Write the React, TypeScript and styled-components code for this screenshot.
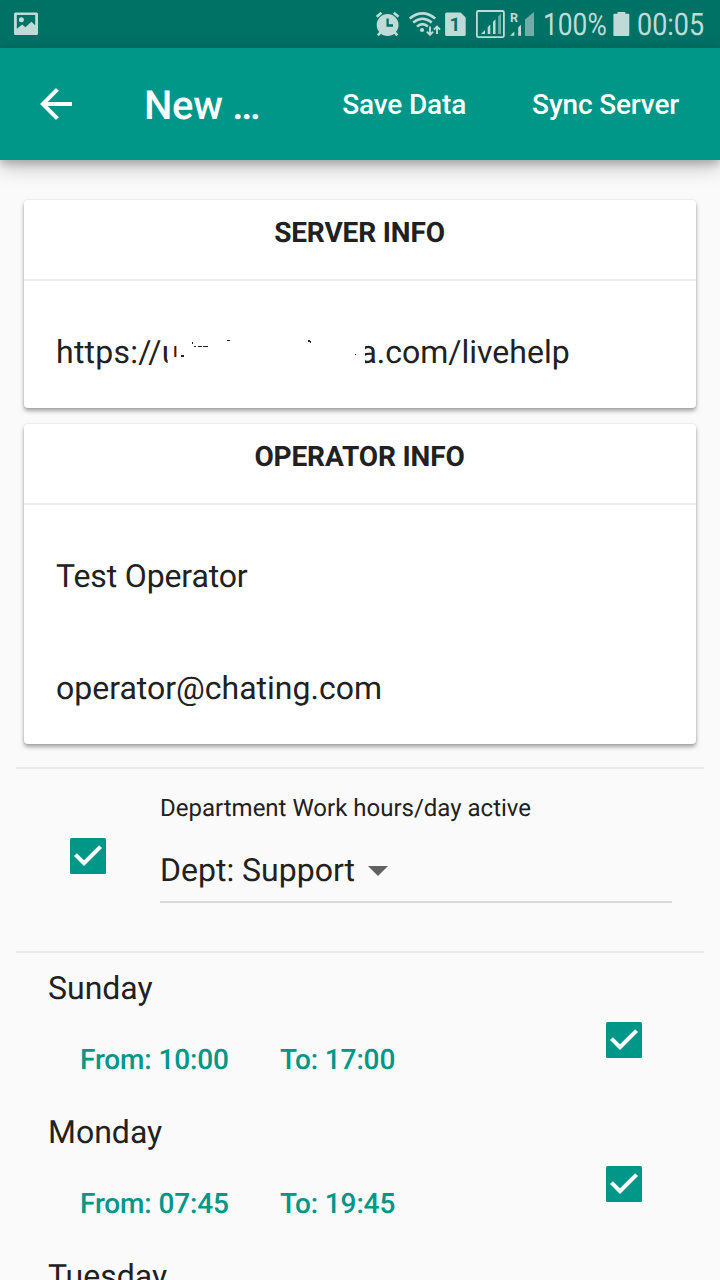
import React from "react";
import styled, { createGlobalStyle } from "styled-components";

const TEAL = "#009688";
const INK = "#212121";
const STATUS = "#bfdbd8";

const GlobalStyle = createGlobalStyle`
  *, *::before, *::after { box-sizing: border-box; }
  html, body { margin: 0; padding: 0; background: #fafafa; }
  body { height: 1280px; overflow: hidden; }
`;

const Screen = styled.div`
  width: 720px;
  height: 1280px;
  overflow: hidden;
  display: flex;
  flex-direction: column;
  background: #fafafa;
  color: ${INK};
  font-family: Roboto, "Liberation Sans", sans-serif;
  font-size: 32px;
  line-height: 38px;
  text-rendering: geometricPrecision;
  svg { display: block; flex: none; }
`;

const StatusBar = styled.div`
  flex: none;
  height: 48px;
  padding: 0 15px 0 14px;
  display: flex;
  align-items: center;
  background: #007165;
  color: ${STATUS};
`;

const StatusIcons = styled.div`
  margin: 0 7px 0 auto;
  width: 160px;
  height: 48px;
`;

const StatusText = styled.span<{ $width: number; $scale: number }>`
  width: ${(p) => p.$width}px;
  font-size: 31px;
  line-height: 48px;
  padding-top: 1px;
  white-space: nowrap;
  transform: scaleX(${(p) => p.$scale});
  transform-origin: left center;
`;

const BatteryIcon = styled.svg`
  margin: 0 7px 0 6px;
`;

const AppBar = styled.header`
  flex: none;
  position: relative;
  z-index: 1;
  height: 112px;
  padding: 0 41px 0 32px;
  display: flex;
  align-items: center;
  background: ${TEAL};
  color: #fff;
  box-shadow: 0 4px 8px rgba(0, 0, 0, 0.2), 0 8px 20px rgba(0, 0, 0, 0.2);
`;

const Title = styled.h1`
  margin: 0 auto 0 64px;
  padding-top: 3px;
  font-size: 40px;
  line-height: 48px;
  font-weight: 500;
  letter-spacing: -0.3px;
`;

const BarButton = styled.button`
  margin: 0 0 0 66px;
  padding: 2px 0 0;
  border: 0;
  background: none;
  color: inherit;
  font: 500 28px/34px Roboto, "Liberation Sans", sans-serif;
  letter-spacing: -0.15px;
  white-space: nowrap;
`;

const Cards = styled.main`
  flex: none;
  padding: 40px 24px 23px;
  display: flex;
  flex-direction: column;
  gap: 16px;
`;

const Card = styled.section`
  background: #fff;
  border-radius: 4px;
  box-shadow: 0 3px 4px rgba(0, 0, 0, 0.34), 0 0 2px rgba(0, 0, 0, 0.12);
`;

const CardTitle = styled.h2`
  margin: 0 0 15px;
  height: 81px;
  padding: 16px 1px 0 0;
  border-bottom: 2px solid #ebebeb;
  text-align: center;
  font-size: 28px;
  line-height: 34px;
  font-weight: 700;
  letter-spacing: -0.14px;
`;

const Field = styled.div<{ $tracking?: number }>`
  height: 112px;
  padding: 0 32px;
  display: flex;
  align-items: center;
  white-space: pre;
  letter-spacing: ${(p) => p.$tracking ?? 0}px;
`;

const Scheme = styled.span`
  letter-spacing: 0.25px;
`;

const Hidden = styled.span`
  position: relative;
  width: 197.7px;
  height: 38px;
  svg { position: absolute; left: -0.6px; top: 0; }
`;

const Divider = styled.hr`
  flex: none;
  width: 688px;
  height: 2px;
  margin: 0 16px;
  border: 0;
  background: #e9e9e9;
`;

const Department = styled.section`
  flex: none;
  height: 182px;
  padding: 0 48px 0 70px;
  display: flex;
  gap: 54px;
`;

const DepartmentCheck = styled.div`
  padding-top: 69px;
`;

const DepartmentBody = styled.div`
  flex: 1;
  padding-top: 25px;
`;

const Label = styled.div`
  font-size: 24px;
  line-height: 29px;
`;

const Select = styled.div`
  height: 80px;
  padding-top: 16px;
  border-bottom: 2px solid #d9d9d9;
  display: flex;
  align-items: center;
  gap: 13px;
  svg { margin-top: 2px; }
`;

const Day = styled.section`
  flex: none;
  height: 144px;
  padding: 16px 78px 0 48px;
  display: flex;
  justify-content: space-between;
`;

const DayCheck = styled.div`
  padding-top: 53px;
`;

const Hours = styled.div`
  margin: 36px 0 0 32px;
  display: grid;
  grid-template-columns: 200px 200px;
  color: ${TEAL};
  font-size: 28px;
  line-height: 34px;
  font-weight: 500;
  letter-spacing: -0.14px;
`;

const Checked = () => (
  <svg width="36" height="36" viewBox="0 0 36 36">
    <rect width="36" height="36" rx="1.5" fill={TEAL} />
    <path d="M14 28L4 18l2.8-2.8L14 22.3 29.2 7.2 32 10z" fill="#fff" />
  </svg>
);

const PictureIcon = () => (
  <svg width="24" height="24" viewBox="14 12 24 24" fill={STATUS}>
    <path
      fillRule="evenodd"
      d="M15.5 12.4h21a1.5 1.5 0 0 1 1.5 1.5v19.6a1.5 1.5 0 0 1-1.5 1.5h-21a1.5 1.5 0 0 1-1.5-1.5V13.9a1.5 1.5 0 0 1 1.5-1.5zM16.8 15v13.8l5.4-4.3 3.2 2.7 6-5.4 3.8 3.4V15z"
    />
    <circle cx="21.4" cy="19.8" r="2.5" />
  </svg>
);

const RadioIcons = () => (
  <svg width="160" height="48" viewBox="376 0 160 48" fill={STATUS}>
    <circle cx="387.6" cy="25" r="10.9" />
    <path d="M387.6 18.5v7h5.4" fill="none" stroke="#007165" strokeWidth="2.3" />
    <path d="M376.7 16.8l4.7-4M398.5 16.8l-4.7-4M380.5 32.4l-2.6 3M394.7 32.4l2.6 3" fill="none" stroke={STATUS} strokeWidth="2.6" />
    <g fill="none" stroke={STATUS} strokeWidth="2.6">
      <path d="M409.7 18.4Q422.5 8.3 435.2 18.4" />
      <path d="M413.2 22.6Q422.5 14.9 431.8 22.6" />
      <path d="M417 26.6Q422.4 21.7 427.9 26.4" />
    </g>
    <circle cx="422" cy="30" r="2.1" />
    <path d="M430 26.5v8M426.9 31.7l3.1 3.1 3.1-3.1M437 34v-7.5M433.9 29.6l3.1-3.1 3.1 3.1" fill="none" stroke={STATUS} strokeWidth="1.9" />
    <path d="M446.6 12.4h14l5.1 5.1v16.9a1.5 1.5 0 0 1-1.5 1.5h-17.6a1.5 1.5 0 0 1-1.5-1.5V13.9a1.5 1.5 0 0 1 1.5-1.5z" />
    <text x="455" y="31.2" fontSize="19" fontWeight="700" textAnchor="middle" fill="#007165">1</text>
    <rect x="476.9" y="11" width="27" height="26.2" rx="1.5" fill="none" stroke={STATUS} strokeWidth="1.8" />
    <path d="M481 34l4-4v4zM487.7 27.2l2.6-2.6V34h-2.6zM493 21.8l2.5-2.5V34H493z" />
    <path d="M498.2 16.4l2.8-2.8V34h-2.8z" opacity=".58" />
    <text x="510" y="22.3" fontSize="12.5" fontWeight="700">R</text>
    <path d="M510 35.8l4.3-4.3v4.3zM518.2 27.6l2.8-2.8v11h-2.8z" />
    <path d="M525 19.5l9-7.5v24h-9z" opacity=".58" />
  </svg>
);

const App = () => (
  <>
    <GlobalStyle />
    <Screen>
      <StatusBar>
        <PictureIcon />
        <StatusIcons>
          <RadioIcons />
        </StatusIcons>
        <StatusText $width={64} $scale={0.85}>100%</StatusText>
        <BatteryIcon width="17" height="24" viewBox="0 0 17 24" fill={STATUS}>
          <path d="M4.5 0h7.8v1.7h3.2a.8.8 0 0 1 .8.8v20.7a.8.8 0 0 1-.8.8H1.2a.8.8 0 0 1-.8-.8V2.5a.8.8 0 0 1 .8-.8h3.3z" />
        </BatteryIcon>
        <StatusText $width={68} $scale={0.87}>00:05</StatusText>
      </StatusBar>

      <AppBar>
        <svg width="48" height="48" viewBox="0 0 24 24" fill="#fff">
          <path d="M20 11H7.83l5.59-5.59L12 4l-8 8 8 8 1.41-1.41L7.83 13H20v-2z" />
        </svg>
        <Title>New …</Title>
        <BarButton>Save Data</BarButton>
        <BarButton>Sync Server</BarButton>
      </AppBar>

      <Cards>
        <Card>
          <CardTitle>SERVER INFO</CardTitle>
          <Field>
            <Scheme>https://</Scheme>
            <Hidden>
              u
              <svg width="204" height="38" viewBox="161 333 204 38">
                <path d="M167.6 357H365v12H167.6zM176.4 340H365v20H176.4z" fill="#fff" />
                <path
                  d="M181 355h3v2h-3zM192 342h1v2h-1zM194 346h2v1h-2zM198 346h4v1h-4zM203 346h5v1h-5zM227 340h3v1h-3zM308 340h2v1h1v2h-1v-1h-2zM355 354h1v1h-1z"
                  fill={INK}
                />
              </svg>
            </Hidden>
            a.com/livehelp
          </Field>
        </Card>
        <Card>
          <CardTitle>OPERATOR INFO</CardTitle>
          <Field $tracking={-0.13}>Test Operator</Field>
          <Field>operator@chating.com</Field>
        </Card>
      </Cards>

      <Divider />
      <Department>
        <DepartmentCheck>
          <Checked />
        </DepartmentCheck>
        <DepartmentBody>
          <Label>Department Work hours/day active</Label>
          <Select>
            Dept: Support
            <svg width="20" height="10" viewBox="0 0 20 10" fill="#616161">
              <path d="M0 0h20L10 10z" />
            </svg>
          </Select>
        </DepartmentBody>
      </Department>
      <Divider />

      <Day>
        <div>
          Sunday
          <Hours>
            <span>From: 10:00</span>
            <span>To: 17:00</span>
          </Hours>
        </div>
        <DayCheck>
          <Checked />
        </DayCheck>
      </Day>
      <Day>
        <div>
          Monday
          <Hours>
            <span>From: 07:45</span>
            <span>To: 19:45</span>
          </Hours>
        </div>
        <DayCheck>
          <Checked />
        </DayCheck>
      </Day>
      <Day>
        <div>Tuesday</div>
      </Day>
    </Screen>
  </>
);

export default App;
